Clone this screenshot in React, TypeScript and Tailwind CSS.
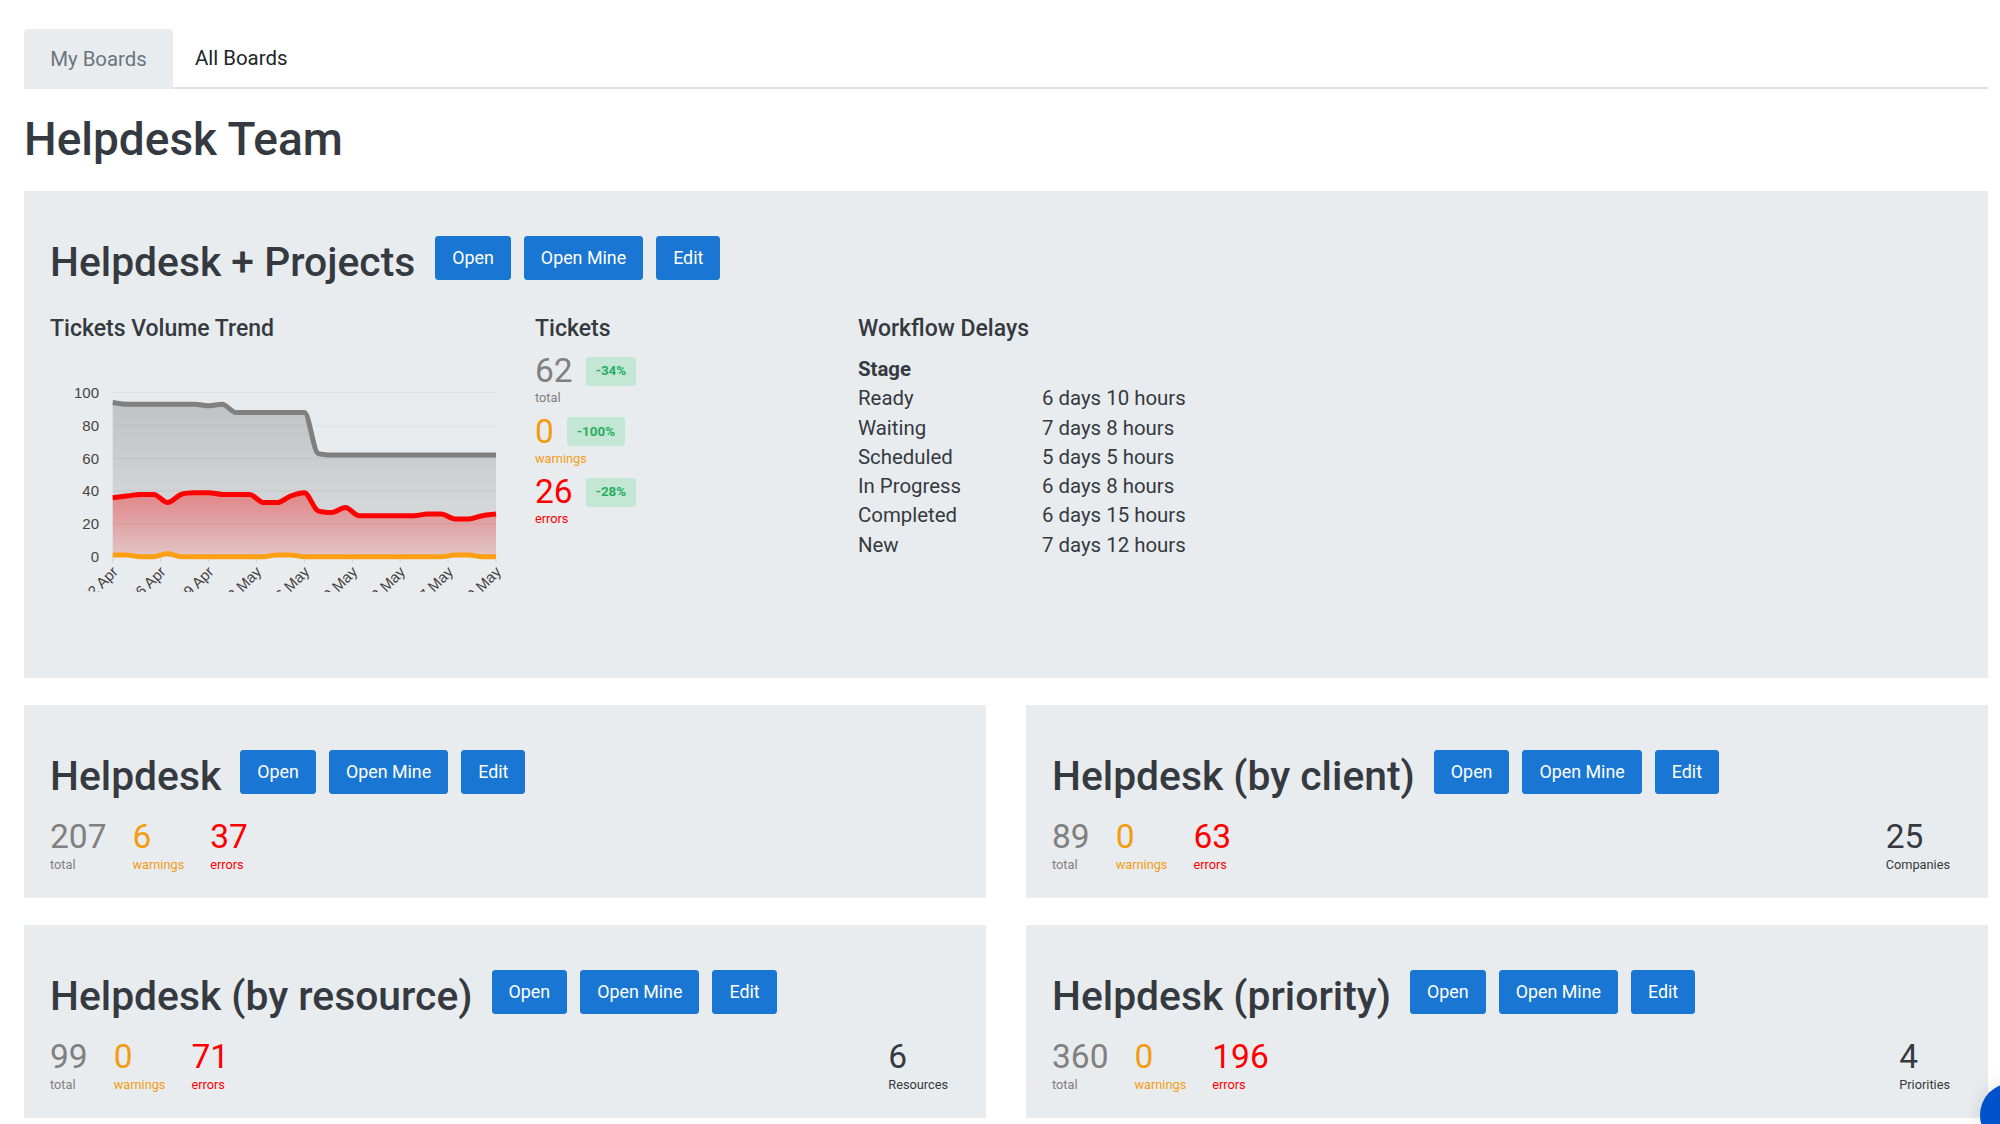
import React from "react";

const BTN = "h-[44px] flex items-center bg-[#1976d2] text-white text-[17.85px] rounded-[3px] px-[16px] border border-[#1976d2]";

function Buttons() {
  return (
    <div className="flex gap-[13px] shrink-0">
      <div className={BTN}>Open</div>
      <div className={BTN}>Open Mine</div>
      <div className={BTN}>Edit</div>
    </div>
  );
}

function Stat({ n, label, num, lab, extra }: { n: string; label: string; num: string; lab: string; extra?: string }) {
  return (
    <div className={extra ?? ""}>
      <div className={`text-[33.5px] leading-[40px] ${num}`}>{n}</div>
      <div className={`text-[12.75px] leading-[14px] mt-[1px] ${lab}`}>{label}</div>
    </div>
  );
}

function Card({ title, total, warn, err, side }: { title: string; total: string; warn: string; err: string; side?: [string, string] }) {
  return (
    <div className="bg-[#e9ecef] h-[193px] pt-[45px] pl-[26px] pr-[38px]">
      <div className="flex gap-[19px]">
        <div className="text-[40.8px] leading-[48px] font-medium text-[#343a40] mt-[2px] whitespace-nowrap">{title}</div>
        <Buttons />
      </div>
      <div className="flex mt-[17px]">
        <Stat n={total} label="total" num="text-[#808080]" lab="text-[#808080]" extra="mr-[26px]" />
        <Stat n={warn} label="warnings" num="text-[#f39c12]" lab="text-[#f39c12]" extra="mr-[26px]" />
        <Stat n={err} label="errors" num="text-[#ff0000]" lab="text-[#ff0000]" />
        {side && <Stat n={side[0]} label={side[1]} num="text-[#343a40]" lab="text-[#343a40]" extra="ml-auto" />}
      </div>
    </div>
  );
}

const X0 = 112.7, X1 = 496, Y0 = 551.7, UNIT = 1.64;
const gray = [94,93,93,93,93,93,93,92,93,88,88,88,88,88,88,63,62,62,62,62,62,62,62,62,62,62,62,62,62];
const red = [36,37,38,38,33,38,39,39,38,38,38,33,33,37,39,28,27,30,25,25,25,25,25,26,26,23,23,25,26];
const orange = [1,1,0,0,2,0,0,0,0,0,0,0,1,1,0,0,0,0,0,0,0,0,0,0,0,1,1,0,0];

function px(i: number) {
  return X0 + ((X1 - X0) * i) / 28;
}
function py(v: number) {
  return Y0 - v * UNIT;
}

function curve(vals: number[]) {
  const xs = vals.map((_, i) => px(i));
  const ys = vals.map(py);
  const n = vals.length;
  const d: number[] = [];
  const s: number[] = [];
  for (let i = 0; i < n - 1; i++) s.push((ys[i + 1] - ys[i]) / (xs[i + 1] - xs[i]));
  d.push(s[0]);
  for (let i = 1; i < n - 1; i++) d.push(s[i - 1] * s[i] <= 0 ? 0 : (s[i - 1] + s[i]) / 2);
  d.push(s[n - 2]);
  for (let i = 0; i < n - 1; i++) {
    if (s[i] === 0) {
      d[i] = 0;
      d[i + 1] = 0;
      continue;
    }
    const a = d[i] / s[i];
    const b = d[i + 1] / s[i];
    const h = a * a + b * b;
    if (h > 9) {
      const t = 3 / Math.sqrt(h);
      d[i] = t * a * s[i];
      d[i + 1] = t * b * s[i];
    }
  }
  let p = `M${xs[0]} ${ys[0]}`;
  for (let i = 0; i < n - 1; i++) {
    const h = (xs[i + 1] - xs[i]) / 3;
    p += ` C${xs[i] + h} ${ys[i] + d[i] * h} ${xs[i + 1] - h} ${ys[i + 1] - d[i + 1] * h} ${xs[i + 1]} ${ys[i + 1]}`;
  }
  return p;
}

function Chart() {
  const ticks = ["22 Apr", "26 Apr", "29 Apr", "03 May", "06 May", "10 May", "13 May", "17 May", "20 May"];
  const close = ` L${X1} ${Y0} L${X0} ${Y0} Z`;
  return (
    <svg viewBox="50 372 470 215" className="w-[470px] h-[215px] block">
      <defs>
        <linearGradient id="gf" gradientUnits="userSpaceOnUse" x1="0" y1={py(100)} x2="0" y2={Y0}>
          <stop offset="0" stopColor="#808080" stopOpacity="0.41" />
          <stop offset="1" stopColor="#808080" stopOpacity="0.11" />
        </linearGradient>
        <linearGradient id="rf" gradientUnits="userSpaceOnUse" x1="0" y1={py(100)} x2="0" y2={Y0}>
          <stop offset="0" stopColor="#ff0000" stopOpacity="0.76" />
          <stop offset="1" stopColor="#ff0000" stopOpacity="0.12" />
        </linearGradient>
      </defs>
      <path d={curve(gray) + close} fill="url(#gf)" />
      <path d={curve(red) + close} fill="url(#rf)" />
      {[0, 20, 40, 60, 80, 100].map((v) => (
        <g key={v}>
          <line x1={X0} x2={X1} y1={py(v)} y2={py(v)} stroke="#000" strokeOpacity="0.04" strokeWidth="1.3" />
          <text x="99" y={py(v) + 5.2} textAnchor="end" fontFamily="Liberation Sans" fontSize="15" fill="#444">
            {v}
          </text>
        </g>
      ))}
      {ticks.map((t, i) => {
        const x = X0 + ((X1 - X0) * i) / 8;
        return (
          <g key={t}>
            <line x1={x} x2={x} y1={Y0} y2={Y0 + 6} stroke="#000" strokeOpacity="0.08" strokeWidth="1.3" />
            <text
              textAnchor="end"
              fontFamily="Liberation Sans"
              fontSize="15"
              fill="#444"
              transform={`translate(${x + 6} ${Y0 + 16}) rotate(-45)`}
            >
              {t}
            </text>
          </g>
        );
      })}
      <path d={curve(gray)} fill="none" stroke="#808080" strokeWidth="5" />
      <path d={curve(red)} fill="none" stroke="#ff0000" strokeWidth="5" />
      <path d={curve(orange)} fill="none" stroke="#ffa014" strokeWidth="5" />
    </svg>
  );
}

function TrendRow({ n, label, delta, color }: { n: string; label: string; delta: string; color: string }) {
  return (
    <div className="h-[60.6px]">
      <div className="flex items-center gap-[13px] h-[30px]">
        <div className={`text-[33.5px] leading-[30px] ${color}`}>{n}</div>
        <div className="h-[29px] flex items-center rounded-[3px] bg-[#c3e6d5] text-[#27ae60] text-[13.4px] font-bold px-[10px]">{delta}</div>
      </div>
      <div className={`text-[12.75px] leading-[14px] mt-[5px] ${color}`}>{label}</div>
    </div>
  );
}

const DELAYS = [
  ["Ready", "6 days 10 hours"],
  ["Waiting", "7 days 8 hours"],
  ["Scheduled", "5 days 5 hours"],
  ["In Progress", "6 days 8 hours"],
  ["Completed", "6 days 15 hours"],
  ["New", "7 days 12 hours"],
];

export default function App() {
  return (
    <div className="relative h-[1124px] overflow-hidden bg-white pl-[24px] pr-[12px] pt-[29px] font-[family-name:Roboto,sans-serif] text-[#343a40]">
      <div className="flex h-[60px] border-b-2 border-[#dee2e6] text-[20.4px]">
        <div className="w-[149px] h-[60px] flex items-center justify-center bg-[#e9ecef] rounded-t-[4px] text-[#6c757d]">My Boards</div>
        <div className="h-[59px] flex items-center ml-[22px] text-[#212529]">All Boards</div>
      </div>
      <h1 className="h-[102px] flex items-center text-[46px] font-medium text-[#343a40] pb-[2px]">Helpdesk Team</h1>
      <div className="bg-[#e9ecef] h-[487px] pt-[45px] pl-[26px]">
        <div className="flex gap-[20px]">
          <div className="text-[40.8px] leading-[48px] font-medium mt-[2px]">Helpdesk + Projects</div>
          <Buttons />
        </div>
        <div className="flex mt-[28px]">
          <div className="w-[485px]">
            <div className="text-[23px] leading-[30px] font-medium">Tickets Volume Trend</div>
            <div className="mt-[33px]">
              <Chart />
            </div>
          </div>
          <div className="w-[323px]">
            <div className="text-[23px] leading-[30px] font-medium">Tickets</div>
            <div className="mt-[12px]">
              <TrendRow n="62" label="total" delta="-34%" color="text-[#808080]" />
              <TrendRow n="0" label="warnings" delta="-100%" color="text-[#f39c12]" />
              <TrendRow n="26" label="errors" delta="-28%" color="text-[#ff0000]" />
            </div>
          </div>
          <div>
            <div className="text-[23px] leading-[30px] font-medium">Workflow Delays</div>
            <div className="mt-[11px] text-[20.4px] leading-[29.3px]">
              <div className="font-bold">Stage</div>
              {DELAYS.map(([a, b]) => (
                <div key={a} className="flex">
                  <div className="w-[184px]">{a}</div>
                  <div>{b}</div>
                </div>
              ))}
            </div>
          </div>
        </div>
      </div>
      <div className="grid grid-cols-2 gap-x-[40px] gap-y-[27px] mt-[27px]">
        <Card title="Helpdesk" total="207" warn="6" err="37" />
        <Card title="Helpdesk (by client)" total="89" warn="0" err="63" side={["25", "Companies"]} />
        <Card title="Helpdesk (by resource)" total="99" warn="0" err="71" side={["6", "Resources"]} />
        <Card title="Helpdesk (priority)" total="360" warn="0" err="196" side={["4", "Priorities"]} />
      </div>
      <div className="absolute left-[1980px] top-[1083px] w-[64px] h-[64px] rounded-full bg-[#0052cc] shadow-[0_0_20px_rgba(0,0,0,0.12)]" />
    </div>
  );
}
